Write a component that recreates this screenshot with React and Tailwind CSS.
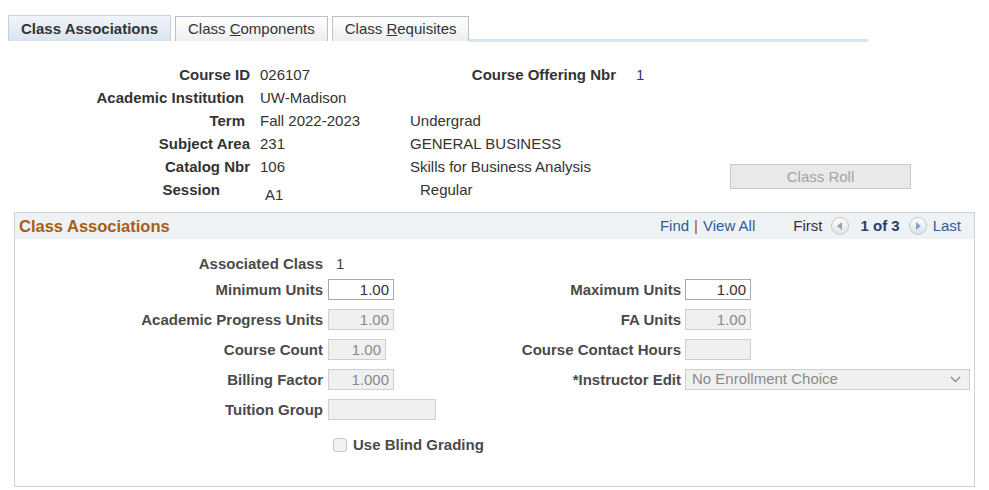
import React from 'react';

const font = { fontFamily: '"Liberation Sans", Arial, sans-serif' };

const headerRows = [
    { label: 'Course ID', pr: 'pr-0', value: '026107', extra: null },
    { label: 'Academic Institution', pr: 'pr-[6px]', value: 'UW-Madison', extra: null },
    { label: 'Term', pr: 'pr-[5px]', value: 'Fall 2022-2023', extra: 'Undergrad' },
    { label: 'Subject Area', pr: 'pr-0', value: '231', extra: 'GENERAL BUSINESS' },
    { label: 'Catalog Nbr', pr: 'pr-0', value: '106', extra: 'Skills for Business Analysis' },
];

const Field = ({ value, width, disabled }) => (
    <div
        className={`h-[21px] ${width} border text-right pr-[4px] leading-[19px] text-[15px] ${
            disabled ? 'bg-[#f0f0f0] border-[#cfcfcf] text-[#8a8a8a]' : 'bg-white border-[#a8a8a8] text-[#333]'
        }`}
    >
        {value}
    </div>
);

const NavArrow = ({ dir }) => (
    <span className="inline-flex w-[18px] h-[18px] rounded-full border border-[#c4c8cc] bg-gradient-to-b from-[#fdfdfd] to-[#dfe3e6] items-center justify-center">
        <svg width="6" height="8" viewBox="0 0 6 8">
            {dir === 'left' ? (
                <path d="M5 0 L0 4 L5 8 Z" fill="#9aa0a6" />
            ) : (
                <path d="M1 0 L6 4 L1 8 Z" fill="#7fa3cf" />
            )}
        </svg>
    </span>
);

const Label = ({ children }) => (
    <span className="font-bold text-[15px] text-[#4a4a4a] whitespace-nowrap">{children}</span>
);

const App = () => {
    return (
        <div className="w-[989px] h-[490px] bg-white text-[#333] overflow-hidden" style={font}>
            {/* tabs */}
            <div className="flex items-end ml-[8px] mt-[15px] w-[860px]">
                <div className="h-[26px] px-[12px] border border-b-0 border-[#c5d1de] bg-gradient-to-b from-[#f1f5fa] to-[#d9e4f0] font-bold text-[15px] leading-[25px] text-[#333]">
                    Class Associations
                </div>
                <div className="ml-[4px] h-[25px] px-[12px] border border-b-0 border-[#b9c0c8] bg-gradient-to-b from-white to-[#eeeeee] text-[15px] leading-[24px] text-[#333]">
                    Class <span className="underline">C</span>omponents
                </div>
                <div className="ml-[4px] h-[25px] px-[12px] border border-b-0 border-[#b9c0c8] bg-gradient-to-b from-white to-[#eeeeee] text-[15px] leading-[24px] text-[#333]">
                    Class <span className="underline">R</span>equisites
                </div>
                <div className="flex-1 h-[3px] mb-[-1px] bg-[#dae4f0]"></div>
            </div>

            {/* header info */}
            <div className="flex mt-[23px]">
                <div className="w-[730px] text-[15px]">
                    {headerRows.map((r, i) => (
                        <div key={r.label} className="flex h-[23px] items-center">
                            <div className={`w-[250px] text-right font-bold ${r.pr}`}>{r.label}</div>
                            <div className="w-[160px] pl-[10px]">{r.value}</div>
                            {i === 0 ? (
                                <div className="flex">
                                    <div className="w-[206px] text-right font-bold">Course Offering Nbr</div>
                                    <div className="pl-[20px] text-[#2d3a6e]">1</div>
                                </div>
                            ) : (
                                <div>{r.extra}</div>
                            )}
                        </div>
                    ))}
                    <div className="flex h-[23px] items-center">
                        <div className="w-[250px] text-right font-bold pr-[30px]">Session</div>
                        <div className="w-[160px] pl-[15px] pt-[10px]">A1</div>
                        <div className="pl-[10px]">Regular</div>
                    </div>
                </div>
                <div className="pt-[100px]">
                    <div className="w-[181px] h-[25px] border border-[#c8c8c8] bg-[#e9e9e9] text-center text-[15px] leading-[23px] text-[#a3a3a3]">
                        Class Roll
                    </div>
                </div>
            </div>

            {/* class associations box */}
            <div className="ml-[14px] mt-[10px] w-[961px] h-[275px] border border-[#cdd2d6]">
                <div className="h-[26px] bg-[#eef2f4] flex items-center justify-between pl-[4px] pr-[13px]">
                    <span className="font-bold text-[16.5px] text-[#a65d14]">Class Associations</span>
                    <div className="flex items-center text-[15px]">
                        <span className="text-[#2a5d98]">Find</span>
                        <span className="mx-[5px] text-[#a24a2a]">|</span>
                        <span className="text-[#2a5d98]">View All</span>
                        <span className="ml-[38px] text-[#333]">First</span>
                        <span className="ml-[9px] flex"><NavArrow dir="left" /></span>
                        <span className="ml-[11px] font-bold text-[#24406b]">1 of 3</span>
                        <span className="ml-[9px] flex"><NavArrow dir="right" /></span>
                        <span className="ml-[6px] text-[#2a5d98]">Last</span>
                    </div>
                </div>

                <div className="pt-[15px]">
                    <div className="flex h-[20px] items-center">
                        <div className="w-[308px] text-right"><Label>Associated Class</Label></div>
                        <div className="pl-[13px] text-[15px] text-[#444]">1</div>
                    </div>

                    <div className="mt-[5px] flex flex-col gap-[9px]">
                        <div className="flex items-center h-[21px]">
                            <div className="w-[455px] flex items-center">
                                <div className="w-[308px] text-right"><Label>Minimum Units</Label></div>
                                <div className="ml-[5px]"><Field value="1.00" width="w-[66px]" /></div>
                            </div>
                            <div className="w-[211px] text-right"><Label>Maximum Units</Label></div>
                            <div className="ml-[4px]"><Field value="1.00" width="w-[66px]" /></div>
                        </div>
                        <div className="flex items-center h-[21px]">
                            <div className="w-[455px] flex items-center">
                                <div className="w-[308px] text-right"><Label>Academic Progress Units</Label></div>
                                <div className="ml-[5px]"><Field value="1.00" width="w-[66px]" disabled /></div>
                            </div>
                            <div className="w-[211px] text-right"><Label>FA Units</Label></div>
                            <div className="ml-[4px]"><Field value="1.00" width="w-[66px]" disabled /></div>
                        </div>
                        <div className="flex items-center h-[21px]">
                            <div className="w-[455px] flex items-center">
                                <div className="w-[308px] text-right"><Label>Course Count</Label></div>
                                <div className="ml-[5px]"><Field value="1.00" width="w-[58px]" disabled /></div>
                            </div>
                            <div className="w-[211px] text-right"><Label>Course Contact Hours</Label></div>
                            <div className="ml-[4px]"><Field value="" width="w-[66px]" disabled /></div>
                        </div>
                        <div className="flex items-center h-[21px]">
                            <div className="w-[455px] flex items-center">
                                <div className="w-[308px] text-right"><Label>Billing Factor</Label></div>
                                <div className="ml-[5px]"><Field value="1.000" width="w-[66px]" disabled /></div>
                            </div>
                            <div className="w-[211px] text-right"><Label>*Instructor Edit</Label></div>
                            <div className="ml-[4px] w-[285px] h-[21px] border border-[#cfcfcf] bg-[#f0f0f0] flex items-center justify-between pl-[6px] pr-[8px] text-[15px] text-[#8a8a8a]">
                                <span>No Enrollment Choice</span>
                                <svg width="11" height="7" viewBox="0 0 11 7">
                                    <path d="M1 1 L5.5 5.5 L10 1" fill="none" stroke="#8a8a8a" strokeWidth="1.4" />
                                </svg>
                            </div>
                        </div>
                        <div className="flex items-center h-[21px]">
                            <div className="w-[308px] text-right"><Label>Tuition Group</Label></div>
                            <div className="ml-[5px]"><Field value="" width="w-[108px]" disabled /></div>
                        </div>
                    </div>

                    <div className="flex items-center mt-[13px] pl-[318px]">
                        <span className="w-[14px] h-[14px] rounded-[3px] border border-[#c8c8c8] bg-[#f2f2f2]"></span>
                        <span className="ml-[6px]"><Label>Use Blind Grading</Label></span>
                    </div>
                </div>
            </div>
        </div>
    );
};

export default App;
